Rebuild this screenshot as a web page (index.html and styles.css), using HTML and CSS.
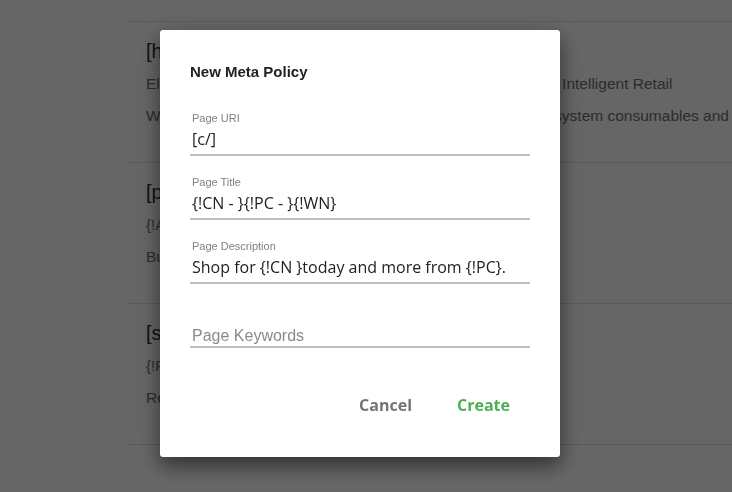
FILE: index.html
```html
<!DOCTYPE html>
<html>
<head>
<meta charset="utf-8">
<link rel="stylesheet" href="styles.css">
</head>
<body>
<div class="page">
  <div class="list">
    <div class="row">
      <div class="row-title">[home]</div>
      <div class="row-line">Electronics, Computing, Printing, Imaging products, plus our Intelligent Retail</div>
      <div class="row-line">We sell genuine printers, computers and complete, printing system consumables and accessories for every business</div>
    </div>
    <div class="row">
      <div class="row-title">[products]</div>
      <div class="row-line small">{!A}</div>
      <div class="row-line">Buy products online</div>
    </div>
    <div class="row">
      <div class="row-title">[search]</div>
      <div class="row-line small">{!F}</div>
      <div class="row-line">Results</div>
    </div>
  </div>
</div>

<div class="overlay">
  <div class="dialog">
    <h2 class="dialog-title">New Meta Policy</h2>
    <div class="field">
      <div class="field-label">Page URI</div>
      <div class="field-value">[c/]</div>
    </div>
    <div class="field">
      <div class="field-label">Page Title</div>
      <div class="field-value">{!CN - }{!PC - }{!WN}</div>
    </div>
    <div class="field">
      <div class="field-label">Page Description</div>
      <div class="field-value">Shop for {!CN }today and more from {!PC}.</div>
    </div>
    <div class="field field-empty">
      <div class="field-placeholder">Page Keywords</div>
    </div>
    <div class="actions">
      <button class="btn btn-cancel">Cancel</button>
      <button class="btn btn-create">Create</button>
    </div>
  </div>
</div>
</body>
</html>
```

FILE: styles.css
```css
html, body {
  margin: 0;
  padding: 0;
  height: 100%;
  overflow: hidden;
  background: #ffffff;
  font-family: "Liberation Sans", Arial, sans-serif;
}

.page {
  padding-left: 126px;
  white-space: nowrap;
  overflow: hidden;
}

.list {
  border-top: 1px solid #e0e0e0;
  margin-top: 21px;
}

.row {
  border-bottom: 1px solid #e0e0e0;
  padding: 16px 0 0 20px;
  box-sizing: border-box;
  height: 141px;
}

.row-title {
  font-size: 20px;
  line-height: 26px;
  color: #2e2e2e;
}

.row-line {
  font-size: 15.5px;
  line-height: 24px;
  color: #6e6e6e;
  margin-top: 8px;
}

.row-line.small {
  font-size: 15px;
}

.overlay {
  position: fixed;
  inset: 0;
  background: rgba(0, 0, 0, 0.6);
  display: flex;
  justify-content: center;
  align-items: flex-start;
  padding: 30px 12px 0 0;
}

.dialog {
  width: 400px;
  height: 427px;
  box-sizing: border-box;
  background: #ffffff;
  border-radius: 3px;
  padding: 31px 30px 0 30px;
  box-shadow: 0 10px 18px rgba(0, 0, 0, 0.38), 0 4px 30px rgba(0, 0, 0, 0.2);
}

.dialog-title {
  margin: 0 0 9px 0;
  font-size: 15px;
  line-height: 22px;
  font-weight: bold;
  color: #222222;
}

.field {
  height: 64px;
  box-sizing: border-box;
  padding-top: 19px;
  border-bottom: 2px solid #bdbdbd;
}

.field-label {
  font-size: 11px;
  line-height: 14px;
  color: #808080;
  padding-left: 2px;
}

.field-value {
  margin-top: 3px;
  font-family: "Open Sans", sans-serif;
  font-size: 16px;
  line-height: 22px;
  color: #222222;
  padding-left: 2px;
}

.field-placeholder {
  margin-top: 22px;
  font-size: 16px;
  line-height: 22px;
  color: #8a8a8a;
  padding-left: 2px;
}

.actions {
  display: flex;
  justify-content: flex-end;
  margin-top: 46px;
  gap: 5px;
}

.btn {
  border: none;
  background: none;
  font-family: "Open Sans", sans-serif;
  font-weight: bold;
  font-size: 16px;
  line-height: 22px;
  padding: 0 20px;
  cursor: pointer;
}

.btn-cancel {
  color: #757575;
}

.btn-create {
  color: #4caf50;
}
```
